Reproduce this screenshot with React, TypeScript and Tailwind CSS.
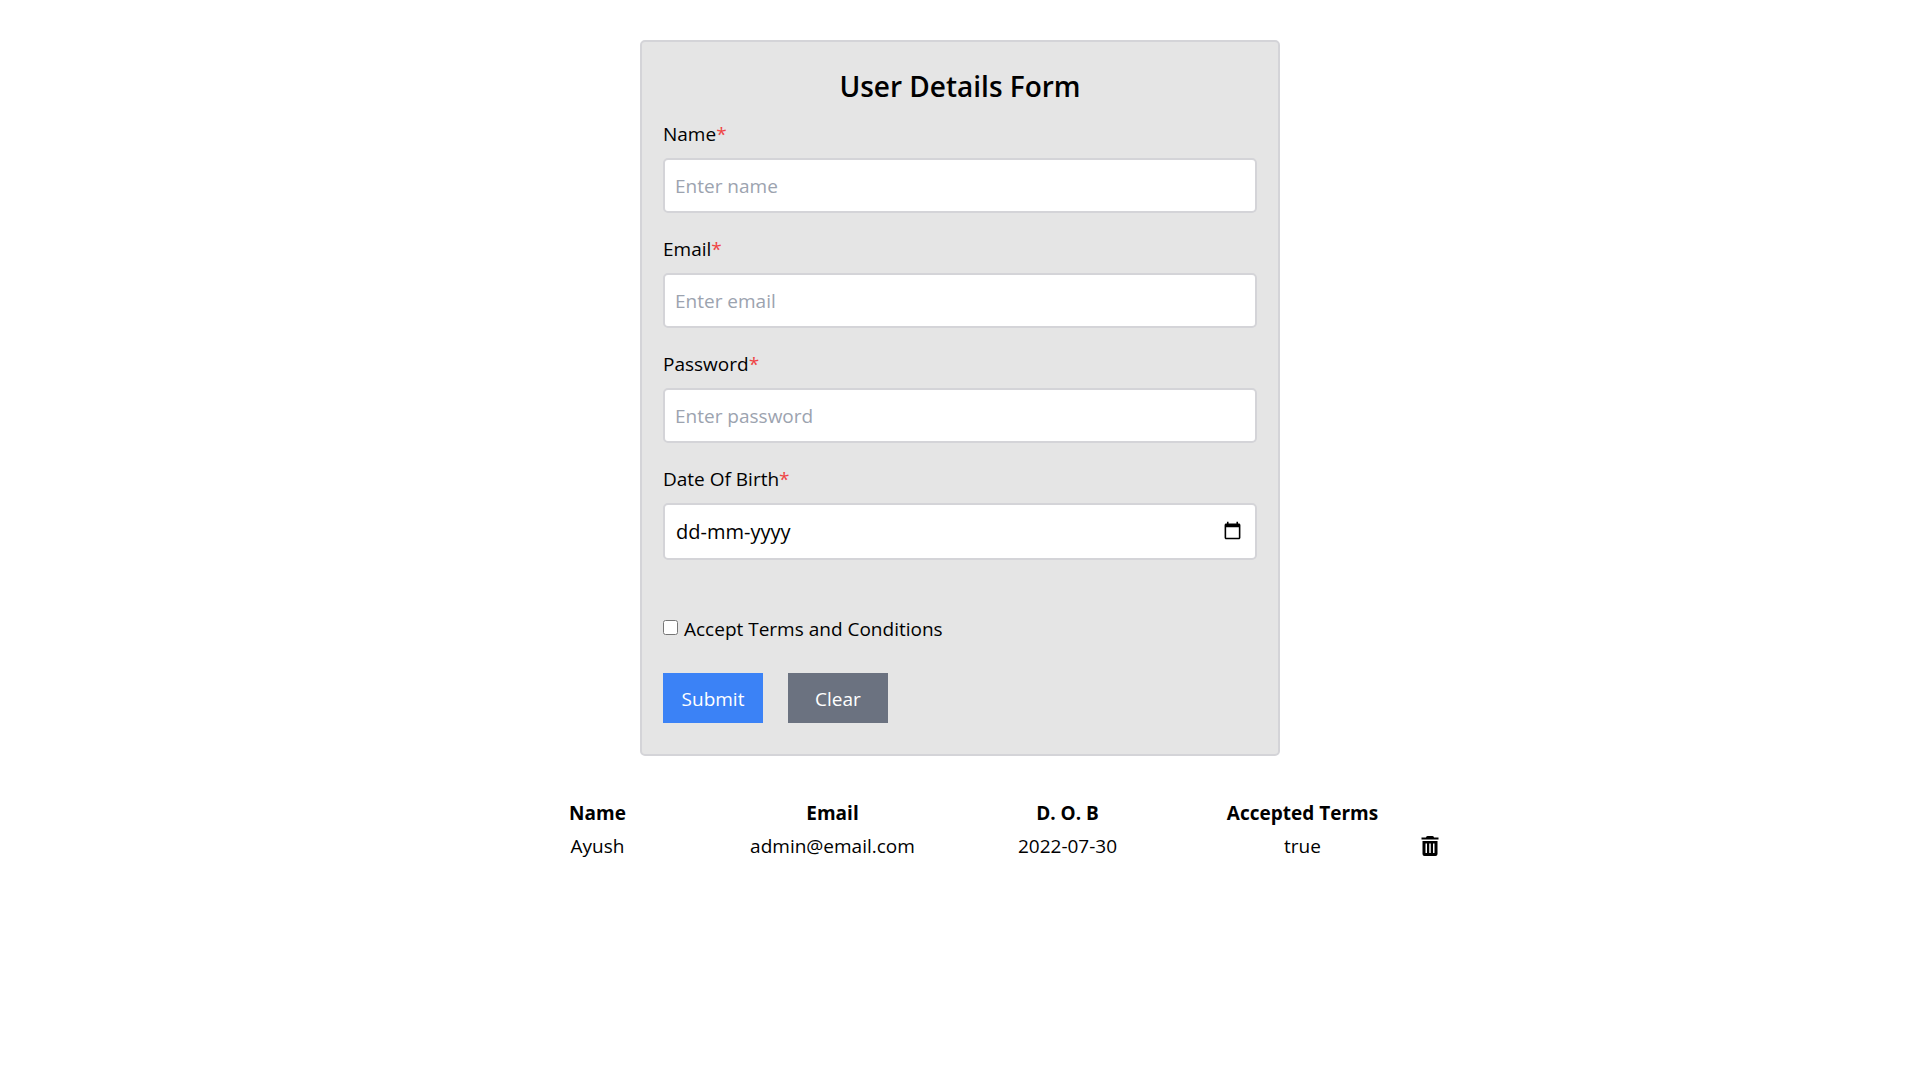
import { useState, type FormEvent, type ReactNode } from 'react';

type User = { name: string; email: string; dob: string; accepted: boolean };

const inputClass =
  'block h-[55px] w-full rounded-[5px] border-2 border-[#d4d4d8] bg-white px-[10px] text-black placeholder:text-[#9ca3af] outline-none focus:border-blue-500';

function Field({ id, label, children }: { id: string; label: string; children: ReactNode }) {
  return (
    <div className="mb-[21px]">
      <label htmlFor={id} className="mb-[9px] block">
        {label}
        <span className="text-[#ef4444]">*</span>
      </label>
      {children}
    </div>
  );
}

function CalendarIcon() {
  return (
    <svg viewBox="0 0 24 24" className="size-[19px]" fill="currentColor" aria-hidden="true">
      <path d="M20 3h-1V1h-2v2H7V1H5v2H4c-1.100 0-2 .9-2 2v16c0 1.100.9 2 2 2h16c1.100 0 2-.9 2-2V5c0-1.100-.9-2-2-2zm0 18H4V8h16v13z" />
    </svg>
  );
}

function TrashIcon() {
  return (
    <svg viewBox="0 0 20 20" className="size-5" fill="currentColor" aria-hidden="true">
      <path d="M6 1.500Q6 0 7.500 0h5Q14 0 14 1.500h4.500v2h-17v-2z" />
      <path
        fillRule="evenodd"
        d="M2.500 5h15v13q0 2-2 2h-11q-2 0-2-2zM5.500 7.500V17H7V7.500zM9.250 7.500V17h1.500V7.500zM13 7.500V17h1.500V7.500z"
      />
    </svg>
  );
}

export default function App() {
  const [users, setUsers] = useState<User[]>([
    { name: 'Ayush', email: 'admin@email.com', dob: '2022-07-30', accepted: true },
  ]);

  const addUser = (event: FormEvent<HTMLFormElement>) => {
    event.preventDefault();
    const data = new FormData(event.currentTarget);
    setUsers([
      ...users,
      {
        name: String(data.get('name')),
        email: String(data.get('email')),
        dob: String(data.get('dob')),
        accepted: data.get('terms') !== null,
      },
    ]);
    event.currentTarget.reset();
  };

  return (
    <main className="pt-10 font-['Segoe_UI','Open_Sans',sans-serif] text-[19px] leading-[30px] text-black">
      <form
        onSubmit={addUser}
        className="mx-auto w-1/3 rounded-[5px] border-2 border-[#d4d4d8] bg-[#e5e5e5] px-[21px] pt-6 pb-[31px]"
      >
        <h1 className="mb-[13px] text-center text-[28px] leading-10 font-semibold">User Details Form</h1>
        <Field id="name" label="Name">
          <input id="name" name="name" type="text" required placeholder="Enter name" className={inputClass} />
        </Field>
        <Field id="email" label="Email">
          <input id="email" name="email" type="email" required placeholder="Enter email" className={inputClass} />
        </Field>
        <Field id="password" label="Password">
          <input id="password" name="password" type="password" required placeholder="Enter password" className={inputClass} />
        </Field>
        <Field id="dob" label="Date Of Birth">
          <div className="flex h-[57px] items-center rounded-[5px] border-2 border-[#d4d4d8] bg-white pr-[13px] pl-[11px]">
            <input
              id="dob"
              name="dob"
              type="text"
              required
              placeholder="dd-mm-yyyy"
              className="min-w-0 flex-1 bg-transparent text-[20px] outline-none placeholder:text-black"
            />
            <button type="button" aria-label="Choose date" className="mb-[2px]">
              <CalendarIcon />
            </button>
          </div>
        </Field>
        <div className="mt-[54px] mb-[29px] flex items-center gap-[6px]">
          <input id="terms" name="terms" type="checkbox" className="mb-1 size-[15px]" />
          <label htmlFor="terms">Accept Terms and Conditions</label>
        </div>
        <div className="flex gap-[25px]">
          <button type="submit" className="h-[50px] w-[100px] bg-[#3b82f6] pt-[2px] text-white">
            Submit
          </button>
          <button type="reset" className="h-[50px] w-[100px] bg-[#6b7280] pt-[2px] text-white">
            Clear
          </button>
        </div>
      </form>

      <table className="mx-auto mt-10 w-1/2 table-fixed text-center">
        <colgroup>
          <col />
          <col />
          <col />
          <col />
          <col className="w-5" />
        </colgroup>
        <thead>
          <tr className="h-[33px]">
            <th>Name</th>
            <th>Email</th>
            <th>D. O. B</th>
            <th>Accepted Terms</th>
            <td />
          </tr>
        </thead>
        <tbody>
          {users.map((user, index) => (
            <tr key={index} className="h-[33px]">
              <td>{user.name}</td>
              <td>{user.email}</td>
              <td>{user.dob}</td>
              <td>{String(user.accepted)}</td>
              <td>
                <button
                  type="button"
                  aria-label={`Delete ${user.name}`}
                  className="block"
                  onClick={() => setUsers(users.filter((_, i) => i !== index))}
                >
                  <TrashIcon />
                </button>
              </td>
            </tr>
          ))}
        </tbody>
      </table>
    </main>
  );
}
